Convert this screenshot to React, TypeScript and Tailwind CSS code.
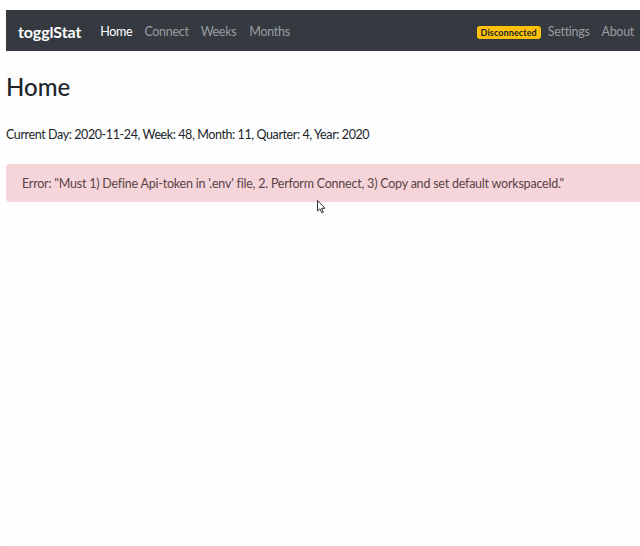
import React from "react";

export default function App() {
  const font = { fontFamily: 'Lato, "Open Sans", sans-serif' };
  return (
    <div className="w-[640px] h-[546px] overflow-hidden bg-white pl-[6px] pt-[10px]" style={font}>
      <div className="relative w-[650px] h-[536px] bg-[#fdfdfe]">
        <nav className="h-[41px] bg-[#343a40] flex items-center pt-[3px] pl-[12px] pr-[22px]">
          <span className="text-white font-bold text-[16px] tracking-[-0.1px] mr-[19px]">togglStat</span>
          <div className="flex items-center gap-[12px] text-[12.5px] tracking-[-0.3px]">
            <span className="text-white">Home</span>
            <span className="text-[#9a9da0]">Connect</span>
            <span className="text-[#9a9da0]">Weeks</span>
            <span className="text-[#9a9da0] ml-[1px]">Months</span>
          </div>
          <div className="ml-auto flex items-center gap-[7px] text-[12.5px] tracking-[-0.3px]">
            <span className="bg-[#ffc107] text-[#212529] font-bold text-[9px] tracking-[0.1px] leading-none px-[4px] py-[2px] rounded-[3px]">Disconnected</span>
            <span className="text-[#9a9da0] mr-[5px]">Settings</span>
            <span className="text-[#9a9da0]">About</span>
          </div>
        </nav>
        <h1 className="text-[#212529] text-[24px] font-medium leading-none mt-[24px]">Home</h1>
        <p className="text-[#212529] text-[12.5px] tracking-[-0.4px] leading-none mt-[30px]">
          Current Day: 2020-11-24, Week: 48, Month: 11, Quarter: 4, Year: 2020
        </p>
        <div className="mt-[22px] h-[38px] bg-[#f5d5d9] rounded-l-[4px] flex items-center pt-[3px] pl-[16px] text-[#5a4347] text-[12.5px] tracking-[-0.22px]">
          Error: "Must 1) Define Api-token in '.env' file, 2. Perform Connect, 3) Copy and set default workspaceId."
        </div>
        <svg className="absolute left-[311px] top-[190px]" width="9" height="14" viewBox="0 0 9 14">
          <path d="M0.5 0.5 L0.5 11 L3 8.8 L4.8 12.8 L6.3 12.1 L4.6 8.3 L8 8.3 Z" fill="white" stroke="#333" strokeWidth="1" />
        </svg>
      </div>
    </div>
  );
}
